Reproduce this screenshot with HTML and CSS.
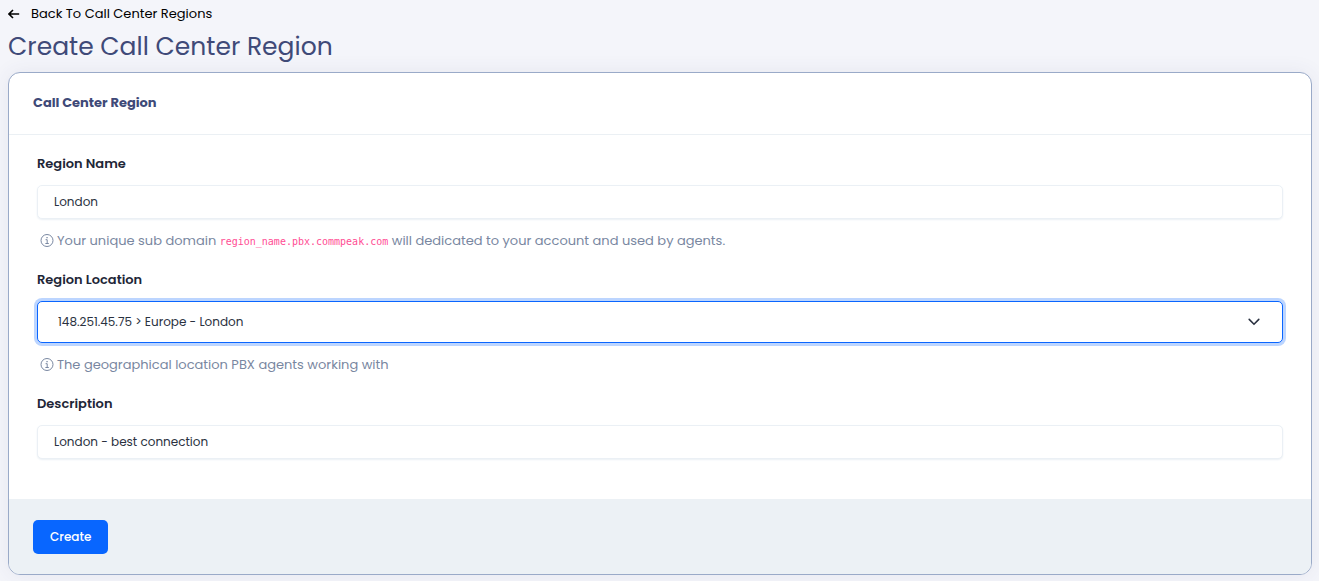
FILE: index.html
```html
<!DOCTYPE html>
<html lang="en">
<head>
<meta charset="utf-8">
<title>Create Call Center Region</title>
<link rel="stylesheet" href="styles.css">
</head>
<body>
<main class="page">
  <a class="back" href="#">
    <svg class="back-icon" viewBox="0 0 12 10" aria-hidden="true"><path d="M11.2 5H1M5 1L1 5l4 4"/></svg>
    <span>Back To Call Center Regions</span>
  </a>
  <h1 class="title">Create Call Center Region</h1>
  <form class="card">
    <h2 class="card-header">Call Center Region</h2>
    <div class="card-body">
      <div class="field">
        <label class="label" for="name">Region Name</label>
        <input class="control" id="name" type="text" value="London">
        <p class="help">
          <svg class="info" viewBox="0 0 14 14" aria-hidden="true"><circle cx="7" cy="6.500" r="6"/><path d="M5.600 5.700H7.200V9.500M5.400 9.500h3.400"/><path class="dot" d="M6.400 2.900h1.300v1.300H6.400z"/></svg>
          <span>Your unique sub domain <code class="domain">region_name.pbx.commpeak.com</code> will dedicated to your account and used by agents.</span>
        </p>
      </div>
      <div class="field">
        <label class="label" for="location">Region Location</label>
        <div class="select-wrap">
          <select class="control select" id="location">
            <option>148.251.45.75 &gt; Europe - London</option>
          </select>
          <svg class="chevron" viewBox="0 0 12 8" aria-hidden="true"><path d="M1.200 1.400L6 6.200l4.800-4.800"/></svg>
        </div>
        <p class="help">
          <svg class="info" viewBox="0 0 14 14" aria-hidden="true"><circle cx="7" cy="6.500" r="6"/><path d="M5.600 5.700H7.200V9.500M5.400 9.500h3.400"/><path class="dot" d="M6.400 2.900h1.300v1.300H6.400z"/></svg>
          <span>The geographical location PBX agents working with</span>
        </p>
      </div>
      <div class="field">
        <label class="label" for="description">Description</label>
        <input class="control" id="description" type="text" value="London - best connection">
      </div>
    </div>
    <div class="card-footer">
      <button class="button" type="submit">Create</button>
    </div>
  </form>
</main>
</body>
</html>
```
FILE: styles.css
```css
* {
  box-sizing: border-box;
}

body {
  margin: 0;
  background: #f4f5fa;
  color: #1e2637;
  font: 13px/20px Poppins, Inter, sans-serif;
}

.page {
  padding: 4px 7px 6px 8px;
}

.back {
  display: flex;
  align-items: center;
  gap: 11px;
  color: #000;
  text-decoration: none;
}

.back-icon {
  width: 12px;
  height: 10px;
  fill: none;
  stroke: #000;
  stroke-width: 1.6;
}

.title {
  margin: 5px 0 7px;
  color: #3f4a78;
  font-size: 25px;
  font-weight: 400;
  line-height: 36px;
}

.card {
  overflow: hidden;
  border: 1px solid #9aaac8;
  border-radius: 12px;
  background: #fff;
  box-shadow: 0 0 20px rgba(60, 60, 110, 0.08);
}

.card-header {
  margin: 0;
  padding: 20px 24px 21px;
  border-bottom: 1px solid #ebf0f4;
  color: #3f4a78;
  font-size: 13px;
  font-weight: 700;
}

.card-body {
  display: flex;
  flex-direction: column;
  gap: 19px;
  padding: 19px 28px 40px;
}

.field {
  display: flex;
  flex-direction: column;
}

.label {
  margin-bottom: 11px;
  font-weight: 600;
}

.control {
  width: 100%;
  height: 34px;
  padding: 0 16px;
  border: 1px solid #ebf0f5;
  border-radius: 5px;
  outline: none;
  background: #fff;
  box-shadow: 0 1px 2px #ebf0f5;
  color: #2a3140;
  font: inherit;
  font-size: 12px;
}

.select-wrap {
  display: grid;
  align-items: center;
}

.select,
.chevron {
  grid-area: 1 / 1;
}

.select {
  height: 42px;
  padding: 0 20px;
  border-color: #0a66ff;
  box-shadow: 0 0 0 3px #bcd5ff;
  appearance: none;
}

.chevron {
  justify-self: end;
  width: 12px;
  height: 8px;
  margin-right: 23px;
  fill: none;
  stroke: #2a3140;
  stroke-width: 1.6;
  stroke-linecap: round;
  pointer-events: none;
}

.help {
  display: flex;
  align-items: center;
  gap: 3px;
  margin: 12px 0 0;
  padding-left: 3px;
  color: #7987a1;
}

.info {
  flex: none;
  width: 14px;
  height: 14px;
  fill: none;
  stroke: #7987a1;
}

.dot {
  fill: #7987a1;
  stroke: none;
}

.domain {
  color: #ff4d94;
  font-family: "DejaVu Sans Mono", monospace;
  font-size: 10px;
  line-height: 1;
}

.card-footer {
  padding: 21px 24px 20px;
  background: #ecf1f5;
}

.button {
  display: block;
  height: 34px;
  padding: 0 17px;
  border: 0;
  border-radius: 5px;
  background: #0866ff;
  color: #fff;
  font: inherit;
  font-size: 12px;
  font-weight: 500;
}
```
